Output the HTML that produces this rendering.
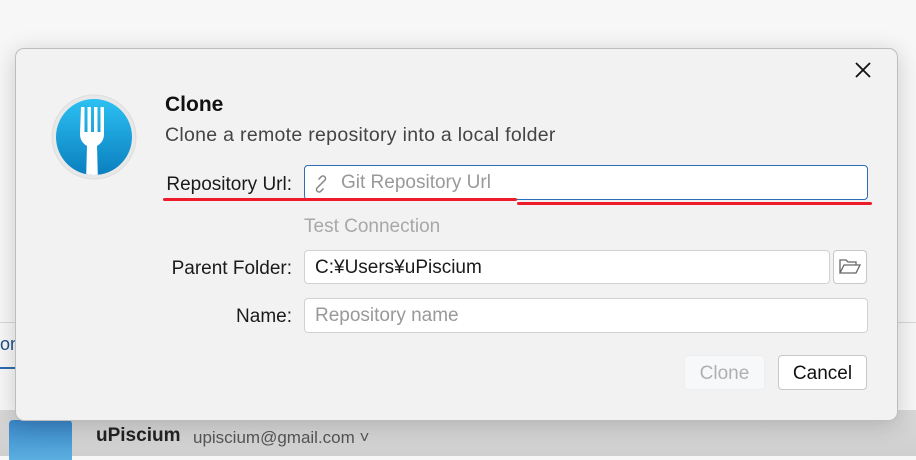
<!DOCTYPE html>
<html><head><style>
body{margin:0;width:916px;height:456px;overflow:hidden;background:#f7f7f7;font-family:"Segoe UI","Liberation Sans",sans-serif;position:relative}
.bgbot{position:absolute;left:0;top:410px;width:916px;height:46px;background:linear-gradient(#d8d8d8,#cfcfcf)}
.bgline{position:absolute;left:0;top:322px;width:916px;height:1px;background:#d6d6d6}
.dlg{position:absolute;left:15px;top:48px;width:881px;height:371px;background:#f2f2f2;border:1.5px solid #bdbdbd;border-radius:9px;box-shadow:0 4px 24px rgba(0,0,0,.18)}
.abs{position:absolute}
.lbl{font-size:19px;color:#1a1a1a;text-align:right;width:140px}
.inp{position:absolute;background:#fff;border:1px solid #d2d2d2;border-radius:4px;box-sizing:border-box;font-size:19px;color:#999;padding-left:10px;line-height:34px}
.btn{position:absolute;border:1px solid #c8c8c8;border-radius:4px;background:#fff;font-size:19px;text-align:center;line-height:35px;box-sizing:border-box}
</style></head><body>
<div class="bgline"></div>
<div class="bgbot"></div>
<div class="abs" style="left:0;top:334px;font-size:18px;color:#1c4f86">on</div>
<div class="abs" style="left:0;top:367px;width:46px;height:2px;background:#2a6cb0"></div>
<div class="abs" style="left:9px;top:420px;width:63px;height:40px;background:linear-gradient(#3a86c8,#5aaee0);border-radius:4px 4px 0 0"></div>
<div class="abs" style="left:96px;top:425px;font-size:19px;font-weight:bold;color:#222">uPiscium</div>
<div class="abs" style="left:193px;top:428px;font-size:17px;color:#555">upiscium@gmail.com ˅</div>
<div class="dlg"></div>
<svg class="abs" style="left:854px;top:61px" width="18" height="18"><path d="M2 2L16 16M16 2L2 16" stroke="#111" stroke-width="1.8"/></svg>
<svg class="abs" style="left:50px;top:94px" width="88" height="88">
<defs><linearGradient id="g" x1="0" y1="0" x2="0" y2="1"><stop offset="0" stop-color="#2cc0f2"/><stop offset="1" stop-color="#0a7fbf"/></linearGradient>
<clipPath id="c"><circle cx="44" cy="43" r="38"/></clipPath></defs>
<circle cx="44" cy="43" r="42" fill="#e8e8e8" stroke="#ddd"/>
<circle cx="44" cy="43" r="38" fill="url(#g)"/>
<g clip-path="url(#c)"><path d="M31 13h3.5v25h3V13h3.5v25h3V13h3.5v25h3V13h3.5v27c0 7-4 10-7 12l1 36h-12l1-36c-3-2-7-5-7-12z" fill="#fff"/></g>
</svg>
<div class="abs" style="left:165px;top:93px;font-size:21px;font-weight:bold;color:#111">Clone</div>
<div class="abs" style="left:165px;top:124px;font-size:19.5px;letter-spacing:0.3px;color:#444">Clone a remote repository into a local folder</div>
<div class="abs lbl" style="left:152px;top:174px">Repository Url:</div>
<div class="inp" style="left:304px;top:165px;width:564px;height:35px;border:1.5px solid #2d6db5;padding-left:36px">Git Repository Url</div>
<svg class="abs" style="left:312px;top:175px" width="18" height="18"><g fill="none" stroke="#888" stroke-width="1.5"><path d="M8 10l-3 3a2.5 2.5 0 0 0 3.5 3.5l3-3"/><path d="M10 8l3-3a2.5 2.5 0 0 0-3.5-3.5l-3 3"/><path d="M7 11l4-4"/></g></svg>
<div class="abs" style="left:163px;top:198px;width:354px;height:3px;background:#ee1c2a;border-radius:2px"></div>
<div class="abs" style="left:517px;top:202px;width:355px;height:3px;background:#ee1c2a;border-radius:2px"></div>
<div class="abs" style="left:304px;top:216px;font-size:19px;color:#a8a8a8">Test Connection</div>
<div class="abs lbl" style="left:152px;top:258px">Parent Folder:</div>
<div class="inp" style="left:304px;top:250px;width:526px;height:34px;color:#1a1a1a">C:¥Users¥uPiscium</div>
<div class="btn" style="left:833px;top:250px;width:34px;height:34px"></div>
<svg class="abs" style="left:838px;top:257px" width="24" height="20"><path d="M2 16V3h6l2 2h8v3M2 16l4-8h16l-4 8z" fill="none" stroke="#666" stroke-width="1.3"/></svg>
<div class="abs lbl" style="left:152px;top:306px">Name:</div>
<div class="inp" style="left:304px;top:298px;width:564px;height:35px">Repository name</div>
<div class="btn" style="left:684px;top:355px;width:81px;height:35px;border-color:#eee;background:#f7f8f9;color:#b0b0b0">Clone</div>
<div class="btn" style="left:778px;top:355px;width:89px;height:35px;color:#111">Cancel</div>
</body></html>
